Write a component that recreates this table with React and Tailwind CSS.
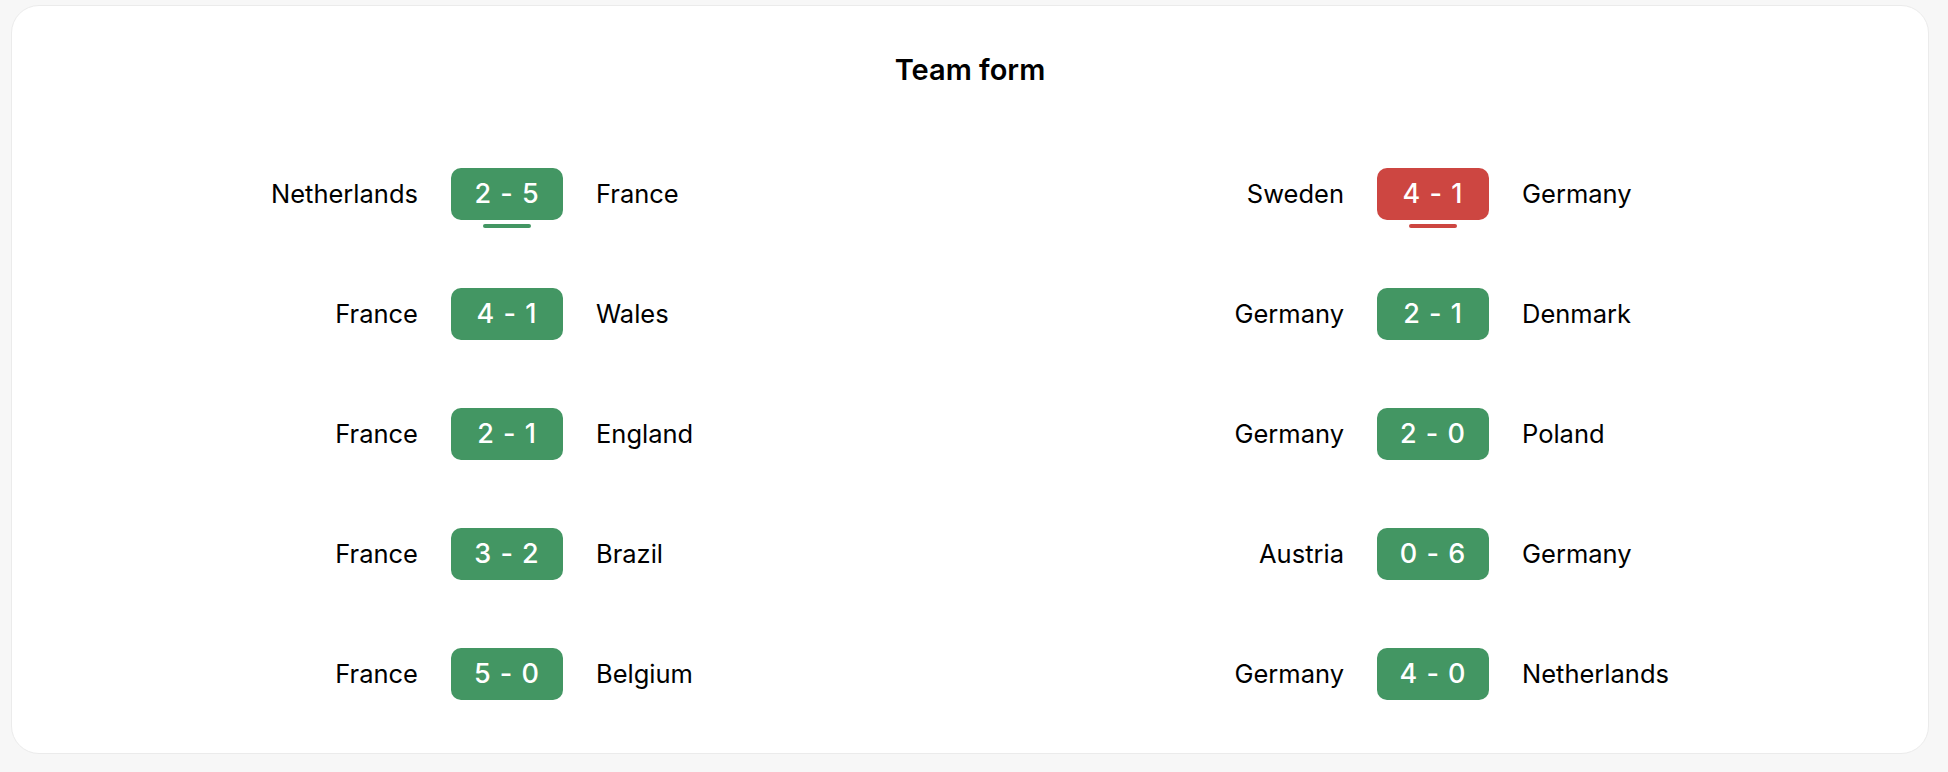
const france = [
  { home: 'Netherlands', away: 'France', score: '2 - 5', result: 'win', current: true },
  { home: 'France', away: 'Wales', score: '4 - 1', result: 'win' },
  { home: 'France', away: 'England', score: '2 - 1', result: 'win' },
  { home: 'France', away: 'Brazil', score: '3 - 2', result: 'win' },
  { home: 'France', away: 'Belgium', score: '5 - 0', result: 'win' },
]

const germany = [
  { home: 'Sweden', away: 'Germany', score: '4 - 1', result: 'loss', current: true },
  { home: 'Germany', away: 'Denmark', score: '2 - 1', result: 'win' },
  { home: 'Germany', away: 'Poland', score: '2 - 0', result: 'win' },
  { home: 'Austria', away: 'Germany', score: '0 - 6', result: 'win' },
  { home: 'Germany', away: 'Netherlands', score: '4 - 0', result: 'win' },
]

function MatchRow({ match }) {
  const win = match.result === 'win'
  return (
    <div className="grid grid-cols-[1fr_112px_1fr] items-center gap-x-[33px]">
      <span className="text-right text-[25.5px] leading-[30px] text-black">{match.home}</span>
      <div className="relative">
        <div
          className={
            win
              ? 'flex h-[52px] items-center justify-center rounded-[10px] bg-[#439663] text-[27px] font-medium tracking-[1px] text-white'
              : 'flex h-[52px] items-center justify-center rounded-[10px] bg-[#cd4641] text-[27px] font-medium tracking-[1px] text-white'
          }
        >
          {match.score}
        </div>
        {match.current && (
          <div
            className={
              win
                ? 'absolute left-1/2 top-full mt-1 h-1 w-12 -translate-x-1/2 rounded-full bg-[#439663]'
                : 'absolute left-1/2 top-full mt-1 h-1 w-12 -translate-x-1/2 rounded-full bg-[#cd4641]'
            }
          />
        )}
      </div>
      <span className="text-left text-[25.5px] leading-[30px] text-black">{match.away}</span>
    </div>
  )
}

export default function App() {
  return (
    <div
      className="min-h-screen bg-[#f7f7f7] pl-[11px] pr-[19px] pt-[5px]"
      style={{ fontFamily: 'Inter, "Noto Sans", sans-serif' }}
    >
      <div className="h-[749px] rounded-[28px] border border-[#ebebeb] bg-white px-[40px] pt-[46px] pb-[53px]">
        <h2 className="text-center text-[29px] font-semibold leading-[36px] text-black">Team form</h2>
        <div className="mt-[80px] grid grid-cols-2 gap-x-4">
          {[france, germany].map((team, i) => (
            <div key={i} className="flex flex-col gap-[68px]">
              {team.map((match, j) => (
                <MatchRow key={j} match={match} />
              ))}
            </div>
          ))}
        </div>
      </div>
    </div>
  )
}
